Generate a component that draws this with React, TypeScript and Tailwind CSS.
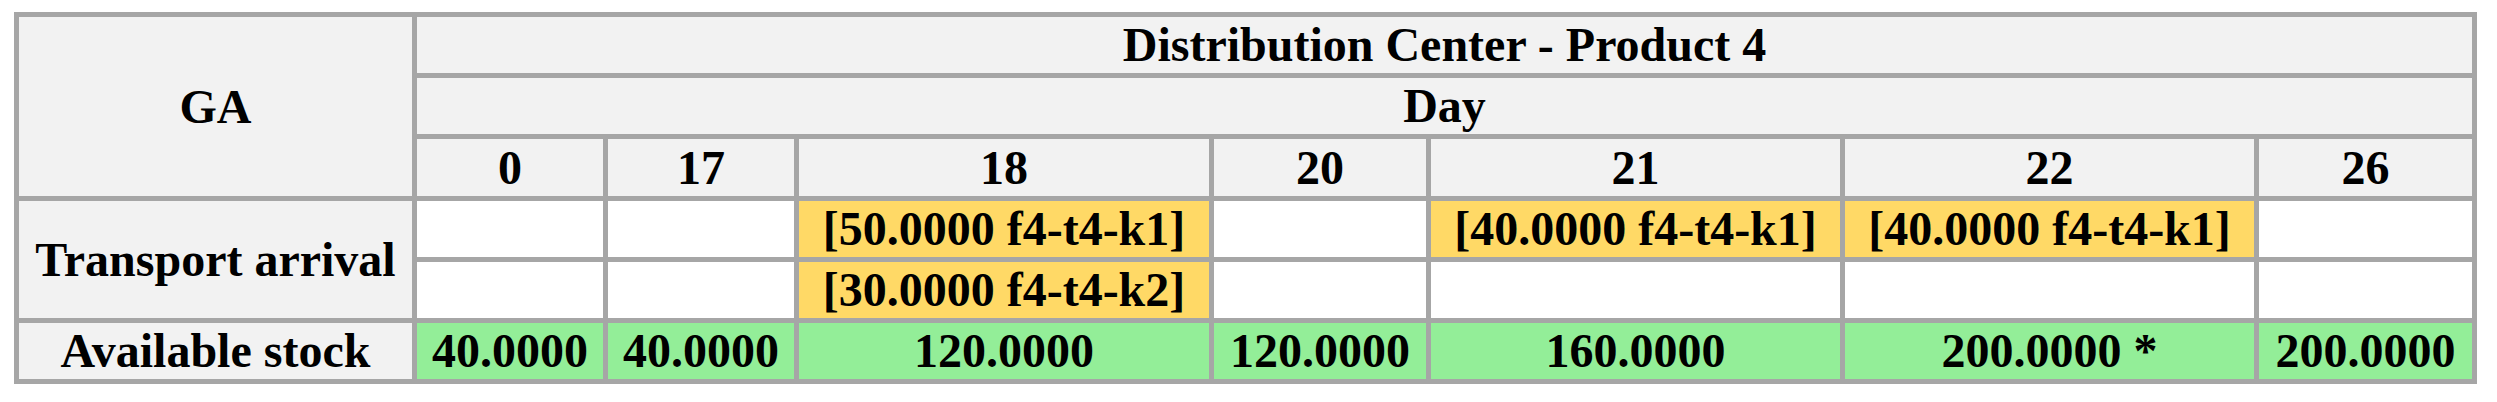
const days = ['0', '17', '18', '20', '21', '22', '26'];

const arrivalsFirst = ['', '', '[50.0000 f4-t4-k1]', '', '[40.0000 f4-t4-k1]', '[40.0000 f4-t4-k1]', ''];
const arrivalsSecond = ['', '', '[30.0000 f4-t4-k2]', '', '', '', ''];

const stock = ['40.0000', '40.0000', '120.0000', '120.0000', '160.0000', '200.0000 *', '200.0000'];

const cell = 'flex items-center justify-center whitespace-nowrap';

function ArrivalCell({ value }: { value: string }) {
  return <div className={`${cell} ${value ? 'bg-[#ffd966]' : 'bg-white'}`}>{value}</div>;
}

export default function App() {
  return (
    <div className="min-h-screen bg-white pl-[14px] pt-[12px]">
      <div className="grid w-max grid-cols-[393px_186px_186px_410px_212px_409px_409px_213px] grid-rows-[56px_56px_57px_56px_56px_56px] gap-[5px] bg-[#a6a6a6] p-[5px] font-['Liberation_Serif','Times_New_Roman',serif] text-[48px] font-bold text-black">
        {/* Header */}
        <div className={`${cell} row-span-3 bg-[#f2f2f2]`}>GA</div>
        <div className={`${cell} col-span-7 bg-[#f2f2f2]`}>Distribution Center - Product 4</div>
        <div className={`${cell} col-span-7 bg-[#f2f2f2]`}>Day</div>
        {days.map((d) => (
          <div key={d} className={`${cell} bg-[#f2f2f2]`}>
            {d}
          </div>
        ))}

        {/* Transport arrival */}
        <div className={`${cell} row-span-2 bg-[#f2f2f2]`}>Transport arrival</div>
        {arrivalsFirst.map((v, i) => (
          <ArrivalCell key={`a1-${i}`} value={v} />
        ))}
        {arrivalsSecond.map((v, i) => (
          <ArrivalCell key={`a2-${i}`} value={v} />
        ))}

        {/* Available stock */}
        <div className={`${cell} bg-[#f2f2f2]`}>Available stock</div>
        {stock.map((v, i) => (
          <div key={`s-${i}`} className={`${cell} bg-[#93ee98]`}>
            {v}
          </div>
        ))}
      </div>
    </div>
  );
}
